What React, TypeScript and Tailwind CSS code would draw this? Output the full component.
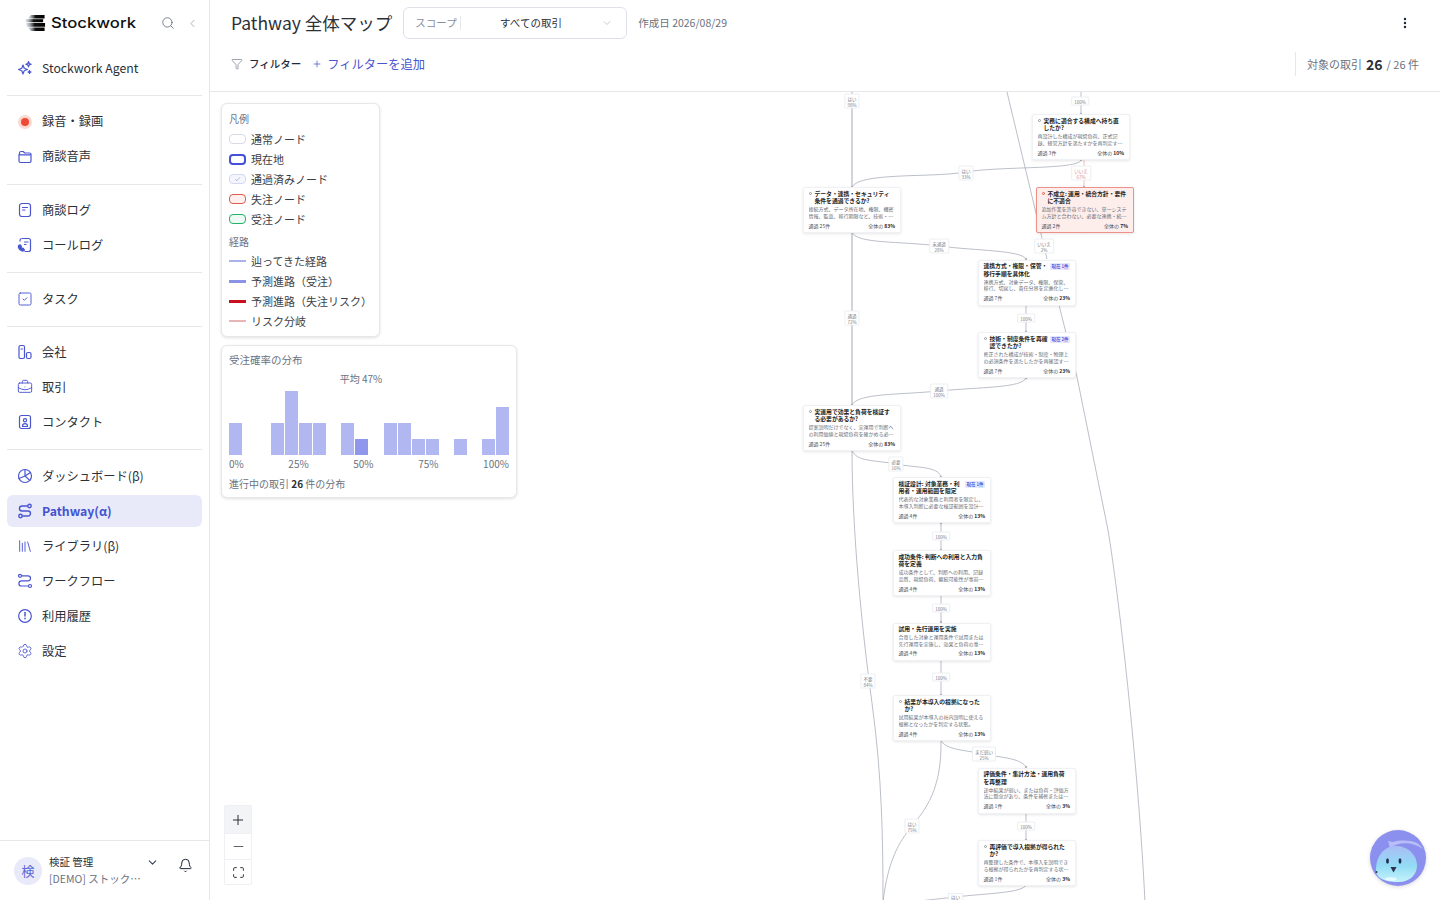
import {
  Bell,
  BriefcaseBusiness,
  ChevronDown,
  ChevronLeft,
  EllipsisVertical,
  Filter,
  Library,
  Maximize,
  Minus,
  Plus,
  Search,
  Settings,
  SquareCheck,
} from "lucide-react";
import type { ReactNode } from "react";

const iconClass = "w-[16px] h-[16px] text-[#4a56d0]";

function Svg({ children }: { children: ReactNode }) {
  return (
    <svg viewBox="0 0 16 16" fill="none" stroke="currentColor" strokeWidth="1.2" strokeLinecap="round" strokeLinejoin="round" className={iconClass}>
      {children}
    </svg>
  );
}

const AgentIcon = () => (
  <Svg>
    <path d="M6 5l1.2 3.3L10.5 9.5 7.2 10.7 6 14l-1.2-3.3L1.5 9.5l3.3-1.2z" />
    <path d="M11.5 1.5l.7 2 2 .7-2 .7-.7 2-.7-2-2-.7 2-.7z" />
    <path d="M12.5 10.5l.4 1.1 1.1.4-1.1.4-.4 1.1-.4-1.1-1.1-.4 1.1-.4z" />
  </Svg>
);
const FolderIcon = () => (
  <Svg>
    <path d="M2.5 5.5V4a1.500 1.500 0 0 1 1.500-1.500h2.200L7.700 4h4.800A1.500 1.500 0 0 1 14 5.500v6.500a1.500 1.500 0 0 1-1.500 1.500h-9A1.500 1.500 0 0 1 2 12V5.500z" />
    <path d="M2.500 5.800h11" />
  </Svg>
);
const LogIcon = () => (
  <Svg>
    <rect x="2.500" y="1.500" width="11" height="13" rx="2.500" />
    <path d="M5.500 5.500h5M5.500 8h2.500" />
  </Svg>
);
const CallIcon = () => (
  <Svg>
    <path d="M5 1.500h6.500a2 2 0 0 1 2 2v9a2 2 0 0 1-2 2H8" />
    <path d="M3 4V3.500a2 2 0 0 1 1-1.700M7.500 5h3.500M7.500 7.500H9" />
    <path d="M2 8.200c.6-.6 1.400-.6 1.800.1l.4.8c.2.4.1.8-.2 1 .3.700.7 1.100 1.300 1.400.3-.3.7-.3 1 0l.7.6c.5.4.4 1.100-.1 1.500-.6.500-1.400.6-2.200.2C2.800 12.900 1.800 11.800 1.400 10.300 1.200 9.500 1.500 8.700 2 8.200z" fill="currentColor" />
  </Svg>
);
const CompanyIcon = () => (
  <Svg>
    <rect x="2" y="1.500" width="5.500" height="13" rx="1.500" />
    <rect x="9.500" y="8.500" width="4.500" height="6" rx="1.500" />
    <path d="M4 5h1.500" />
  </Svg>
);
const ContactIcon = () => (
  <Svg>
    <rect x="2.500" y="1.500" width="11" height="13" rx="2" />
    <circle cx="8" cy="6.200" r="1.600" />
    <path d="M5.500 12c0-3.300 5-3.300 5 0v.5h-5z" />
  </Svg>
);
const PieIcon = () => (
  <Svg>
    <circle cx="8" cy="8" r="6.500" />
    <path d="M8 1.500V8l4.800 4.400M8 8l-6 2.500M8 8l5.500-3.500" />
  </Svg>
);
const ClockIcon = () => (
  <Svg>
    <circle cx="8" cy="8" r="6.300" />
    <path d="M8 4.500V8" strokeWidth="1.500" />
    <circle cx="8" cy="10.500" r="0.300" />
  </Svg>
);
const PathIcon = ({ strong }: { strong?: boolean }) => (
  <svg viewBox="0 0 16 16" fill="none" stroke="currentColor" strokeWidth={strong ? 1.400 : 1.100} className={iconClass}>
    <circle cx="12.500" cy="3" r="1.700" />
    <circle cx="3.500" cy="13" r="1.700" />
    <path d="M10.800 3H5a2.500 2.500 0 0 0 0 5h6a2.500 2.500 0 0 1 0 5H5.200" />
  </svg>
);
const FlowIcon = () => (
  <svg viewBox="0 0 16 16" fill="none" stroke="currentColor" strokeWidth="1.200" className={iconClass}>
    <circle cx="3" cy="2.800" r="1.500" />
    <circle cx="13" cy="13" r="1.500" />
    <path d="M4.500 2.800H11a2.500 2.500 0 0 1 0 5H4.500a2.500 2.500 0 0 0 0 5.200h7" />
  </svg>
);

type Item = { label: string; icon: ReactNode; active?: boolean };

const groups: Item[][] = [
  [{ label: "Stockwork Agent", icon: <AgentIcon /> }],
  [
    {
      label: "録音・録画",
      icon: (
        <span className="w-[14px] h-[14px] rounded-full bg-[#fcd9d0] flex items-center justify-center">
          <span className="w-[8px] h-[8px] rounded-full bg-[#ef4a35]" />
        </span>
      ),
    },
    { label: "商談音声", icon: <FolderIcon /> },
  ],
  [
    { label: "商談ログ", icon: <LogIcon /> },
    { label: "コールログ", icon: <CallIcon /> },
  ],
  [{ label: "タスク", icon: <SquareCheck className={iconClass} strokeWidth={1.400} /> }],
  [
    { label: "会社", icon: <CompanyIcon /> },
    { label: "取引", icon: <BriefcaseBusiness className={iconClass} strokeWidth={1.400} /> },
    { label: "コンタクト", icon: <ContactIcon /> },
  ],
  [
    { label: "ダッシュボード(β)", icon: <PieIcon /> },
    { label: "Pathway(α)", icon: <PathIcon strong />, active: true },
    { label: "ライブラリ(β)", icon: <Library className={iconClass} strokeWidth={1.400} /> },
    { label: "ワークフロー", icon: <FlowIcon /> },
    { label: "利用履歴", icon: <ClockIcon /> },
    { label: "設定", icon: <Settings className={iconClass} strokeWidth={1.300} /> },
  ],
];

function Sidebar() {
  return (
    <aside className="w-[210px] h-full shrink-0 border-r border-[#e5e7eb] bg-white flex flex-col">
      <div className="h-[46px] flex items-center pl-[25px] pr-[10px]">
        <svg viewBox="0 0 22 18" className="w-[21px] h-[18px]">
          <defs>
            <linearGradient id="logoFade" x1="0" x2="1" y1="0" y2="0">
              <stop offset="0" stopColor="#9fb4c4" stopOpacity="0.300" />
              <stop offset="0.450" stopColor="#111" />
              <stop offset="1" stopColor="#000" />
            </linearGradient>
          </defs>
          <path d="M6 0.500h14.500V4.200H3z" fill="url(#logoFade)" />
          <path d="M0.500 5h18.500v3.200H0.500z" fill="url(#logoFade)" />
          <path d="M1 9h20v3.800H2z" fill="url(#logoFade)" />
          <path d="M3 13.600h17.500V17.500H6z" fill="url(#logoFade)" />
        </svg>
        <span className="ml-[5px] font-['Inter'] text-[14.500px] font-medium text-[#111] [transform:scaleX(1.150)] origin-left">
          Stockwork
        </span>
        <Search className="ml-auto w-[14px] h-[14px] text-[#6b7280]" strokeWidth={1.500} />
        <ChevronLeft className="ml-[11px] w-[13px] h-[13px] text-[#9ca3af]" strokeWidth={1.500} />
      </div>
      <nav className="flex-1 px-[7px] pt-[6px]">
        {groups.map((group, i) => (
          <div key={i} className={i > 0 ? "border-t border-[#e5e7eb] mt-[11px] pt-[9.600px]" : ""}>
            <div className="flex flex-col gap-[3px]">
              {group.map((item) => (
                <div
                  key={item.label}
                  className={`h-[32px] flex items-center gap-[9px] pl-[10px] rounded-[6px] text-[12.250px] ${
                    item.active ? "bg-[#e8eafa] text-[#4353d0] font-bold" : "text-[#2c2f36]"
                  }`}
                >
                  <span className="w-[16px] flex justify-center text-[#4a56d0]">{item.icon}</span>
                  <span>{item.label}</span>
                </div>
              ))}
            </div>
          </div>
        ))}
      </nav>
      <div className="h-[60px] border-t border-[#e5e7eb] flex items-center pl-[14px] pr-[16px]">
        <div className="w-[28px] h-[28px] rounded-full bg-[#e8eafa] text-[#5a67d8] text-[13px] flex items-center justify-center">
          検
        </div>
        <div className="ml-[7px] w-[92px]">
          <div className="text-[10.500px] leading-[17px] text-[#2c2f36] -mt-[1px]">検証 管理</div>
          <div className="text-[10.500px] leading-[17px] text-[#6b7280] whitespace-nowrap">[DEMO] ストック…</div>
        </div>
        <ChevronDown className="ml-[5px] w-[13px] h-[13px] text-[#374151] -mt-[17px]" strokeWidth={2} />
        <Bell className="ml-auto w-[15px] h-[15px] text-[#1f2937] -mt-[10px]" strokeWidth={1.600} />
      </div>
    </aside>
  );
}

function Header() {
  return (
    <header className="h-[92px] shrink-0 border-b border-[#e5e7eb] bg-white relative">
      <div className="h-[46px] flex items-center pl-[21px] pr-[28px]">
        <h1 className="text-[17.500px] text-[#2c2f36]">Pathway 全体マップ</h1>
        <div className="ml-[11px] w-[224px] h-[32px] rounded-[6px] border border-[#dfe1ea] flex items-center px-[11px] text-[10.500px]">
          <span className="text-[#8b909c] pr-[3px] border-r border-[#e5e7eb] leading-[14px]">スコープ</span>
          <span className="flex-1 text-center text-[#2c2f36]">すべての取引</span>
          <ChevronDown className="w-[12px] h-[12px] text-[#b6bac4] mr-[2px]" strokeWidth={1.500} />
        </div>
        <span className="ml-[11px] text-[10.500px] text-[#6b7280]">作成日 2026/08/29</span>
        <EllipsisVertical className="ml-auto w-[14px] h-[14px] text-[#1f2937]" strokeWidth={2.200} />
      </div>
      <div className="h-[36px] flex items-center pl-[21px] pr-[21px]">
        <Filter className="w-[12px] h-[12px] text-[#6b7280]" strokeWidth={1.300} />
        <span className="ml-[6px] text-[10.500px] font-medium text-[#1f2937]">フィルター</span>
        <Plus className="ml-[11px] w-[10px] h-[10px] text-[#4a56d0]" strokeWidth={1.800} />
        <span className="ml-[5px] text-[12.250px] text-[#4a56d0]">フィルターを追加</span>
        <div className="ml-auto h-[24px] border-l border-[#e5e7eb] pl-[11px] flex items-center gap-[4px] text-[11px] text-[#6b7280]">
          <span>対象の取引</span>
          <span className="text-[14px] font-bold text-[#2c2f36]">26</span>
          <span>/ 26 件</span>
        </div>
      </div>
    </header>
  );
}

function Legend() {
  const nodes = [
    { label: "通常ノード", cls: "h-[10px] border border-[#d9dbe3] bg-white" },
    { label: "現在地", cls: "h-[11px] border-[2.500px] border-[#4450d8] bg-white" },
    { label: "通過済みノード", cls: "h-[10px] border border-[#d5d8f2] bg-[#f5f6fd]", check: true },
    { label: "失注ノード", cls: "h-[10px] border border-[#e05a4e] bg-[#fdf0ee]" },
    { label: "受注ノード", cls: "h-[10px] border border-[#25b06e] bg-[#eefaf3]" },
  ];
  const paths = [
    { label: "辿ってきた経路", cls: "h-[1.500px] bg-[#aab2ee]" },
    { label: "予測進路（受注）", cls: "h-[3px] bg-[#8a93e6]" },
    { label: "予測進路（失注リスク）", cls: "h-[3px] bg-[#c8101c]" },
    { label: "リスク分岐", cls: "h-[1.500px] bg-[#e9b4b4]" },
  ];
  return (
    <div className="w-[159px] rounded-[6px] border border-[#e5e7eb] bg-white shadow-[0_1px_3px_rgba(0,0,0,0.120)] px-[7px] pt-[7px] pb-[5px] text-[11px] text-[#3a3e46]">
      <div className="text-[10px] leading-[15px] text-[#6b7280] mb-[3px]">凡例</div>
      {nodes.map((n) => (
        <div key={n.label} className="h-[20px] flex items-center gap-[5px]">
          <span className={`w-[17px] rounded-[4px] flex items-center justify-center ${n.cls}`}>
            {n.check && (
              <svg viewBox="0 0 10 8" className="w-[7px] h-[6px]" fill="none" stroke="#9aa0c8" strokeWidth="1">
                <path d="M1.500 4l2.500 2.500L8.500 1.500" />
              </svg>
            )}
          </span>
          <span>{n.label}</span>
        </div>
      ))}
      <div className="text-[10px] leading-[15px] text-[#6b7280] mt-[5px] mb-[2px]">経路</div>
      {paths.map((p) => (
        <div key={p.label} className="h-[20px] flex items-center gap-[5px]">
          <span className={`w-[17px] ${p.cls}`} />
          <span>{p.label}</span>
        </div>
      ))}
    </div>
  );
}

const bars = [2, 0, 0, 2, 4, 2, 2, 0, 2, 1, 0, 2, 2, 1, 1, 0, 1, 0, 1, 3];

function Distribution() {
  return (
    <div className="w-[296px] rounded-[6px] border border-[#e5e7eb] bg-white shadow-[0_1px_3px_rgba(0,0,0,0.120)] px-[7px] pt-[6px] pb-[6px]">
      <div className="text-[10.500px] leading-[15px] text-[#6b7280]">受注確率の分布</div>
      <div className="text-[10px] leading-[15px] text-[#6b7280] text-center mt-[4px] h-[20px] pr-[16px]">平均 47%</div>
      <div className="h-[64px] flex items-end gap-px">
        {bars.map((b, i) => (
          <div
            key={i}
            className={`flex-1 ${i === 9 ? "bg-[#8e97ec]" : "bg-[#b0b7f1]"}`}
            style={{ height: b * 16 }}
          />
        ))}
      </div>
      <div className="flex justify-between text-[10px] leading-[15px] text-[#6b7280] mt-[1px]">
        <span>0%</span>
        <span>25%</span>
        <span>50%</span>
        <span>75%</span>
        <span>100%</span>
      </div>
      <div className="text-[10px] leading-[15px] text-[#6b7280] mt-[5px]">
        進行中の取引 <span className="font-bold text-[#2c2f36]">26</span> 件の分布
      </div>
    </div>
  );
}

type NodeData = {
  x: number;
  y: number;
  h?: number;
  title: string;
  desc: string;
  pass: string;
  total: string;
  badge?: string;
  question?: boolean;
  lost?: boolean;
};

const nodesData: NodeData[] = [
  { x: 1031.500, y: 114, title: "実務に適合する構成へ持ち直したか?", desc: "再設計した構成が現場負荷、正式記録、経営方針を満たすかを再判定す…", pass: "通過 3件", total: "10%", question: true },
  { x: 802.500, y: 187, title: "データ・連携・セキュリティ条件を通過できるか?", desc: "接続方式、データ所在地、権限、機密情報、監査、移行期限など、技術・…", pass: "通過 25件", total: "83%", question: true },
  { x: 1035.500, y: 187, title: "不成立: 運用・統合方針・要件に不適合", desc: "追加作業を許容できない、単一システム方針と合わない、必要な連携・統…", pass: "通過 2件", total: "7%", question: true, lost: true },
  { x: 977.500, y: 259.500, title: "連携方式・権限・保管・移行手順を具体化", desc: "連携方式、対象データ、権限、保管、移行、切戻し、責任分界を定義化し…", pass: "通過 7件", total: "23%", badge: "現在 1件" },
  { x: 977.500, y: 332, title: "技術・制度条件を再確認できたか?", desc: "修正された構成が技術・制度・物理上の必須条件を満たしたかを再確認す…", pass: "通過 7件", total: "23%", badge: "現在 2件", question: true },
  { x: 802.500, y: 405, title: "実運用で効果と負荷を検証する必要があるか?", desc: "提案説明だけでなく、実運用で判断への利用価値と現場負荷を確かめる必…", pass: "通過 25件", total: "83%", question: true },
  { x: 892.500, y: 477, title: "検証設計: 対象業務・利用者・運用範囲を限定", desc: "代表的な対象業務と利用者を限定し、本導入判断に必要な検証範囲を設計…", pass: "通過 4件", total: "13%", badge: "現在 1件" },
  { x: 892.500, y: 550, title: "成功条件: 判断への利用と入力負荷を定義", desc: "成功条件として、判断への利用、記録品質、現場負荷、継続可能性が事前…", pass: "通過 4件", total: "13%" },
  { x: 892.500, y: 622.500, h: 38, title: "試用・先行運用を実施", desc: "合意した対象と運用条件で試用または先行運用を実施し、効果と負荷の事…", pass: "通過 4件", total: "13%" },
  { x: 892.500, y: 695, title: "結果が本導入の根拠になったか?", desc: "試用結果が本導入の社内説明に使える根拠となったかを判定する状態。", pass: "通過 4件", total: "13%", question: true },
  { x: 977.500, y: 767.500, title: "評価条件・集計方法・運用負荷を再整理", desc: "途中結果が弱い、または負荷・評価方法に懸念があり、条件を補修または…", pass: "通過 1件", total: "3%" },
  { x: 977.500, y: 840, title: "再評価で導入根拠が得られたか?", desc: "再整理した条件で、本導入を説明できる根拠が得られたかを再判定する状…", pass: "通過 1件", total: "3%", question: true },
];

function FlowNode({ n }: { n: NodeData }) {
  return (
    <div
      className={`absolute w-[98.500px] rounded-[2px] border px-[5px] pt-[1.500px] flex flex-col shadow-[0_1px_3px_rgba(0,0,0,0.100)] ${
        n.lost ? "bg-[#fdeeec] border-[#ee8f88]" : "bg-white border-[#f0f1f4]"
      }`}
      style={{ left: n.x - 210, top: n.y - 92, height: n.h ?? 46 }}
    >
      <div className="flex items-start">
        {n.question && (
          <span className={`w-[3.500px] h-[3.500px] mt-[2px] mr-[2.500px] shrink-0 rounded-full border-[0.500px] ${n.lost ? "border-[#e0554d]" : "border-[#999]"}`} />
        )}
        <div className="flex-1 text-[5.800px] leading-[7.800px] font-bold text-[#1b1d22]">{n.title}</div>
        {n.badge && (
          <span className="shrink-0 ml-[2px] mt-[1px] h-[7px] px-[1.500px] rounded-[1px] bg-[#e6e9fd] text-[#3443d8] text-[4.500px] leading-[7px] font-medium whitespace-nowrap">
            {n.badge}
          </span>
        )}
      </div>
      <div className="mt-[1px] h-[13.400px] overflow-hidden text-[5px] leading-[6.700px] text-[#666b75]">{n.desc}</div>
      <div className="mt-auto mb-[3.500px] flex justify-between text-[5px] leading-[6px] text-[#4b5058]">
        <span>{n.pass}</span>
        <span>
          全体の <b className="text-[#1b1d22]">{n.total}</b>
        </span>
      </div>
    </div>
  );
}

const edgeLabels: { x: number; y: number; a?: string; b: string; risk?: boolean }[] = [
  { x: 852, y: 101, a: "はい", b: "98%" },
  { x: 1080, y: 101, b: "100%" },
  { x: 966, y: 173, a: "はい", b: "33%" },
  { x: 1081, y: 173, a: "いいえ", b: "67%", risk: true },
  { x: 939, y: 246, a: "未通過", b: "28%" },
  { x: 1044, y: 246, a: "いいえ", b: "2%" },
  { x: 852, y: 318, a: "通過", b: "72%" },
  { x: 1026, y: 318, b: "100%" },
  { x: 939, y: 391, a: "通過", b: "100%" },
  { x: 896, y: 464, a: "必要", b: "16%" },
  { x: 941, y: 536, b: "100%" },
  { x: 941, y: 608, b: "100%" },
  { x: 941, y: 677, b: "100%" },
  { x: 868, y: 681, a: "不要", b: "84%" },
  { x: 984, y: 754, a: "まだ弱い", b: "25%" },
  { x: 912, y: 826, a: "はい", b: "75%" },
  { x: 1026, y: 826, b: "100%" },
];

const thickEdges = ["M852 92V187", "M852 232V405"];
const thinEdges = [
  "M1081 92V114",
  "M1081 160C1078 170 1000 166 966 172S860 172 852 187",
  "M852 232C856 244 900 241 939 246S1020 250 1026 259",
  "M1026 305V332",
  "M1026 378C1022 388 980 387 939 391S858 393 852 405",
  "M852 450C856 462 875 460 896 464S938 466 941 477",
  "M941 523V550",
  "M941 595V622",
  "M941 660V695",
  "M941 740C945 750 965 750 984 754S1020 758 1026 767",
  "M1026 813V840",
  "M1026 885C1022 893 990 893 955 897S925 900 915 902",
  "M941 740C942 790 925 810 912 826S888 860 883 902",
  "M852 450C852 530 862 630 872 703S883 840 883 902",
  "M1007 92L1047 259",
  "M1059 305L1077 377L1108 530C1118 590 1138 760 1145 902",
];
const dots = [
  [852, 187], [1081, 114], [1081, 160], [1084, 187], [852, 232], [1085, 232], [1026, 259], [1026, 305], [1026, 332], [1026, 378],
  [852, 405], [852, 450], [941, 477], [941, 523], [941, 550], [941, 595], [941, 622], [941, 660], [941, 695], [941, 740],
  [1026, 767], [1026, 813], [1026, 840], [1026, 885],
];

function FlowCanvas() {
  return (
    <>
      <svg className="absolute inset-0 w-full h-full" viewBox="210 92 1230 808" fill="none">
        {thickEdges.map((d) => (
          <path key={d} d={d} stroke="#c4c6cc" strokeWidth="1.500" />
        ))}
        {thinEdges.map((d) => (
          <path key={d} d={d} stroke="#a9aebb" strokeWidth="0.800" />
        ))}
        <path d="M1084 160V187" stroke="#eeb0ac" strokeWidth="0.800" />
        {dots.map(([x, y]) => (
          <circle key={`${x}-${y}`} cx={x} cy={y} r="1.200" fill="#b4b7bf" />
        ))}
      </svg>
      {nodesData.map((n) => (
        <FlowNode key={n.title} n={n} />
      ))}
      {edgeLabels.map((l) => (
        <div
          key={`${l.x}-${l.y}`}
          className={`absolute -translate-x-1/2 -translate-y-1/2 bg-white border border-[#eceef2] rounded-[1px] px-[2px] py-[0.500px] text-center text-[4.500px] leading-[6px] whitespace-nowrap ${
            l.risk ? "text-[#e58d88]" : "text-[#7b808a]"
          }`}
          style={{ left: l.x - 210, top: l.y - 92 }}
        >
          {l.a && <div>{l.a}</div>}
          <div>{l.b}</div>
        </div>
      ))}
      <div className="absolute left-[738px] bottom-0 h-[7px] bg-white border border-b-0 border-[#eceef2] px-[2px] text-[4.500px] leading-[6px] text-[#7b808a]">
        はい
      </div>
    </>
  );
}

function ZoomControls() {
  return (
    <div className="absolute left-[14px] bottom-[15px] w-[28px] bg-white border border-[#eef0f3] rounded-[2px] flex flex-col items-center">
      <div className="w-full h-[27px] bg-[#f3f4f6] flex items-center justify-center">
        <Plus className="w-[16px] h-[16px] text-[#2c2f36]" strokeWidth={1.500} />
      </div>
      <div className="w-full h-[26px] border-t border-[#eef0f3] flex items-center justify-center">
        <Minus className="w-[15px] h-[15px] text-[#2c2f36]" strokeWidth={1.200} />
      </div>
      <div className="w-full h-[25px] border-t border-[#eef0f3] flex items-center justify-center">
        <Maximize className="w-[13px] h-[13px] text-[#2c2f36]" strokeWidth={1.800} />
      </div>
    </div>
  );
}

function Mascot() {
  return (
    <div className="absolute right-[14px] bottom-[14px] w-[56px] h-[56px] rounded-full bg-[#8b8fee] overflow-hidden shadow-[0_1px_4px_rgba(0,0,0,0.150)]">
      <svg viewBox="0 0 56 56" className="w-full h-full">
        <defs>
          <linearGradient id="bird" x1="0" y1="0" x2="0" y2="1">
            <stop offset="0" stopColor="#a9bdf5" />
            <stop offset="0.550" stopColor="#92dcf5" />
            <stop offset="1" stopColor="#c6f3fb" />
          </linearGradient>
        </defs>
        <path d="M18 11l2 7c8-6 22-7 33 1-2-3-4-5-6-6-7-3-17-3-24-1-2 0-3-1-5-1z" fill="#b9bdf7" />
        <path d="M6 40C6 26 14 16 26 16c11 0 21 8 21 20 0 9-8 16-18 16-11 0-23-2-23-12z" fill="url(#bird)" />
        <ellipse cx="17.500" cy="31" rx="1.400" ry="2.800" fill="#1f2d4d" />
        <ellipse cx="30" cy="31" rx="1.400" ry="2.800" fill="#1f2d4d" />
        <path d="M20.500 37h6l-3 5.500z" fill="#2a3350" />
        <ellipse cx="21" cy="49" rx="6" ry="1.800" fill="#e6fbff" />
        <circle cx="6.500" cy="42" r="1" fill="#2a3350" />
      </svg>
    </div>
  );
}

export default function App() {
  return (
    <div className="w-[1440px] h-[900px] flex overflow-hidden bg-white font-['Noto_Sans_CJK_JP','Noto_Sans',sans-serif]">
      <Sidebar />
      <main className="flex-1 flex flex-col min-w-0">
        <Header />
        <div className="flex-1 relative overflow-hidden bg-white bg-[radial-gradient(#e7e8ec_0.700px,transparent_0.700px)] bg-[size:12px_12px]">
          <FlowCanvas />
          <div className="absolute left-[11px] top-[11px] flex flex-col items-start gap-[8px]">
            <Legend />
            <Distribution />
          </div>
          <ZoomControls />
          <Mascot />
        </div>
      </main>
    </div>
  );
}
